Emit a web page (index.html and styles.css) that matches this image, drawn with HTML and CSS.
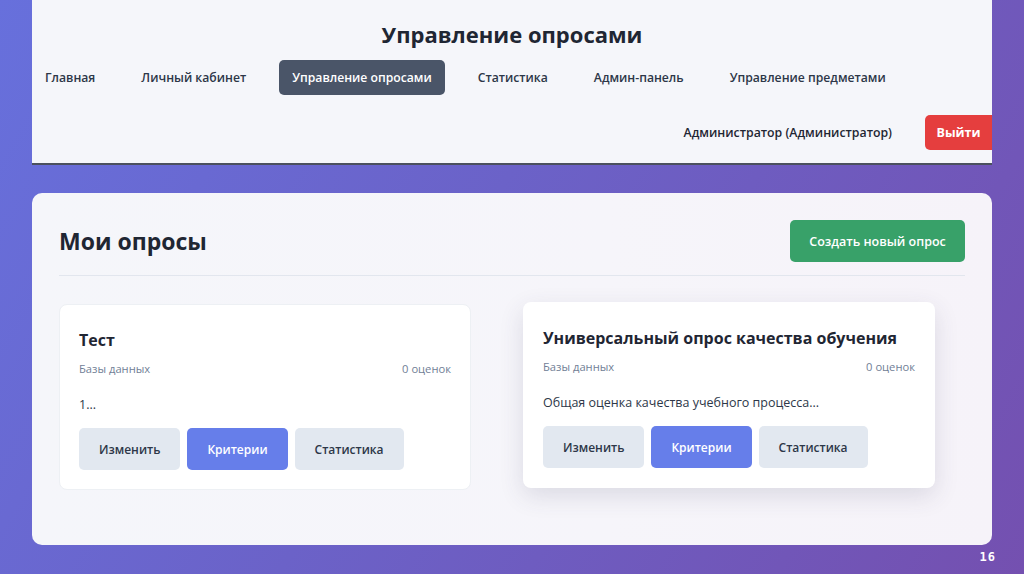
FILE: index.html
```html
<!DOCTYPE html>
<html lang="ru">
<head>
<meta charset="utf-8">
<title>Управление опросами</title>
<link rel="stylesheet" href="styles.css">
</head>
<body>
<div class="page">
  <header class="header">
    <h1 class="header-title">Управление опросами</h1>
    <nav class="nav">
      <a class="nav-link">Главная</a>
      <a class="nav-link">Личный кабинет</a>
      <a class="nav-link active">Управление опросами</a>
      <a class="nav-link">Статистика</a>
      <a class="nav-link">Админ-панель</a>
      <a class="nav-link">Управление предметами</a>
    </nav>
    <div class="user-row">
      <span class="user-name">Администратор (Администратор)</span>
      <button class="btn-logout">Выйти</button>
    </div>
  </header>

  <main class="panel">
    <div class="panel-head">
      <h2 class="panel-title">Мои опросы</h2>
      <button class="btn-create">Создать новый опрос</button>
    </div>
    <div class="survey-grid">
      <div class="survey-card">
        <h3 class="survey-title">Тест</h3>
        <div class="survey-meta"><span>Базы данных</span><span>0 оценок</span></div>
        <p class="survey-desc">1...</p>
        <div class="survey-actions">
          <button class="btn btn-gray">Изменить</button>
          <button class="btn btn-blue">Критерии</button>
          <button class="btn btn-gray">Статистика</button>
        </div>
      </div>
      <div class="survey-card hovered">
        <h3 class="survey-title">Универсальный опрос качества обучения</h3>
        <div class="survey-meta"><span>Базы данных</span><span>0 оценок</span></div>
        <p class="survey-desc">Общая оценка качества учебного процесса...</p>
        <div class="survey-actions">
          <button class="btn btn-gray">Изменить</button>
          <button class="btn btn-blue">Критерии</button>
          <button class="btn btn-gray">Статистика</button>
        </div>
      </div>
    </div>
  </main>
  <div class="slide-num">16</div>
</div>
</body>
</html>
```

FILE: styles.css
```css
* { box-sizing: border-box; }
html, body { margin: 0; padding: 0; }
body {
  width: 1024px;
  height: 574px;
  overflow: hidden;
  font-family: "Open Sans", "Noto Sans", sans-serif;
  color: #2d3748;
  background: linear-gradient(120deg, #6770dc 0%, #6b62c8 45%, #7450b0 100%);
}
.page {
  position: relative;
  height: 574px;
  padding: 0 32px;
}
.header {
  background: #f5f6fa;
  border-bottom: 2px solid #4b505e;
  height: 165px;
  display: flex;
  flex-direction: column;
}
.header-title {
  margin: 18px 0 0;
  text-align: center;
  font-size: 22px;
  line-height: 32px;
  font-weight: 700;
  color: #1f2633;
}
.nav {
  display: flex;
  gap: 20px;
  margin-top: 10px;
}
.nav-link {
  padding: 0 13px;
  height: 35px;
  display: flex;
  align-items: center;
  font-size: 12.2px;
  font-weight: 600;
  color: #2d3748;
  border-radius: 5px;
  white-space: nowrap;
}
.nav-link.active {
  background: #4a5568;
  color: #fff;
}
.user-row {
  display: flex;
  justify-content: flex-end;
  align-items: center;
  gap: 33px;
  margin-top: 20px;
}
.user-name {
  font-size: 12.3px;
  font-weight: 600;
  color: #1f2633;
}
.btn-logout {
  height: 35px;
  width: 67px;
  border: none;
  border-radius: 5px 0 0 5px;
  background: #e53e3e;
  color: #fff;
  font-family: inherit;
  font-size: 12.5px;
  font-weight: 700;
}
.panel {
  margin-top: 28px;
  height: 352px;
  border-radius: 10px;
  background: linear-gradient(90deg, #f5f6fa 0%, #f6f5fa 60%, #f6f3f9 100%);
  padding: 27px;
}
.panel-head {
  display: flex;
  justify-content: space-between;
  align-items: center;
  padding-bottom: 13px;
  border-bottom: 1px solid #e2e6ee;
}
.panel-title {
  margin: 0;
  font-size: 23px;
  font-weight: 700;
  color: #1f2633;
}
.btn-create {
  height: 42px;
  width: 175px;
  border: none;
  border-radius: 5px;
  background: #38a169;
  color: #fff;
  font-family: inherit;
  font-size: 12.5px;
  font-weight: 600;
}
.survey-grid {
  display: grid;
  grid-template-columns: 412px 412px;
  gap: 52px;
  margin-top: 28px;
}
.survey-card {
  background: #fff;
  border: 1px solid #edf0f4;
  border-radius: 8px;
  padding: 22px 19px 19px;
  height: 186px;
}
.survey-card.hovered {
  transform: translateY(-2px);
  box-shadow: 0 8px 24px rgba(60, 60, 90, 0.14);
  border-color: transparent;
}
.survey-title {
  margin: 0;
  font-size: 16px;
  line-height: 26px;
  font-weight: 700;
  color: #1f2633;
  white-space: nowrap;
}
.survey-meta {
  display: flex;
  justify-content: space-between;
  font-size: 11.2px;
  color: #718096;
  margin-top: 8px;
}
.survey-desc {
  margin: 20px 0 0;
  font-size: 12.5px;
  color: #2d3748;
  line-height: 18px;
}
.survey-actions {
  display: flex;
  gap: 7px;
  margin-top: 14px;
}
.btn {
  height: 42px;
  border: none;
  border-radius: 5px;
  padding: 0 20px;
  font-family: inherit;
  font-size: 12px;
  font-weight: 600;
}
.btn-gray { background: #e2e8f0; color: #2d3748; }
.btn-blue { background: #667eea; color: #fff; }
.slide-num {
  position: absolute;
  right: 28px;
  bottom: 10px;
  font-family: "DejaVu Sans Mono", monospace;
  font-size: 12px;
  font-weight: 700;
  color: #fff;
  letter-spacing: 1px;
}
```
